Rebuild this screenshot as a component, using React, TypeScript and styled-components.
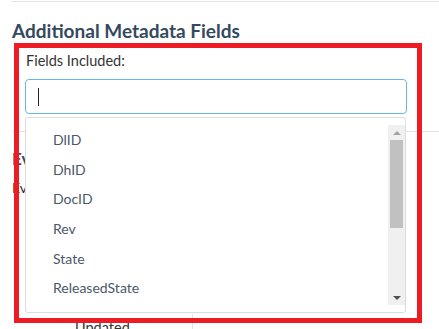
import React from 'react';
import styled, { createGlobalStyle } from 'styled-components';

const GlobalStyle = createGlobalStyle`
  html, body {
    margin: 0;
    padding: 0;
    background: #fff;
    overflow: hidden;
  }
  body {
    font-family: 'Lato', 'Open Sans', sans-serif;
    color: #333;
  }
`;

const Page = styled.div`
  position: relative;
  width: 439px;
  height: 329px;
  overflow: hidden;
`;

const Section = styled.section`
  margin-left: 12px;
  margin-top: 1px;
  border-top: 1px solid #e3e3e3;
`;

const Title = styled.h3`
  margin: 0;
  padding-top: 16px;
  font-size: 19px;
  font-weight: 700;
  color: #34495e;
  line-height: 25px;
`;

const Spacer = styled.div`
  height: 88px;
  border-bottom: 1px solid #e3e3e3;
`;

const SubHeading = styled.h4`
  margin: 0;
  padding-top: 17px;
  font-size: 17px;
  font-weight: 700;
  color: #34495e;
  line-height: 20px;
`;

const SubText = styled.p`
  margin: 0;
  padding-top: 10px;
  font-size: 14px;
  color: #333;
  line-height: 18px;
`;

const TableRow = styled.div`
  margin-top: 117px;
  display: flex;
  height: 20px;
`;

const Cell = styled.div`
  width: 181px;
  padding-left: 63px;
  box-sizing: border-box;
  border-right: 1px solid #e3e3e3;
  font-size: 14.5px;
  color: #333;
  line-height: 20px;
  padding-top: 4px;
`;

/* red annotation frame drawn over the page */
const Highlight = styled.div`
  position: absolute;
  left: 14px;
  top: 43px;
  width: 408px;
  height: 280px;
  box-sizing: border-box;
  border: 5px solid #ed1c24;
  padding: 3px 10px 0 6px;
`;

const Label = styled.label`
  display: block;
  margin-left: 1px;
  font-size: 14.5px;
  line-height: 19px;
  color: #333;
`;

const Input = styled.div`
  position: relative;
  margin-top: 9px;
  height: 35px;
  box-sizing: border-box;
  border: 1px solid #66b6ec;
  border-radius: 4px;
  background: #fff;
`;

const Caret = styled.span`
  position: absolute;
  left: 12px;
  top: 8px;
  width: 1px;
  height: 18px;
  background: #222;
`;

const Menu = styled.div`
  position: absolute;
  left: 6px;
  top: 69px;
  width: 381px;
  height: 196px;
  box-sizing: border-box;
  border: 1px solid #dcdcdc;
  border-radius: 3px;
  background: #fff;
  display: flex;
  padding: 7px 0 7px 0;
`;

const List = styled.ul`
  flex: 1;
  list-style: none;
  margin: 0;
  padding: 0;
`;

const Item = styled.li`
  height: 29.6px;
  display: flex;
  align-items: center;
  padding-left: 27px;
  font-size: 14px;
  color: #4a5868;
`;

const Track = styled.div`
  width: 17px;
  background: #f0f0f0;
  display: flex;
  flex-direction: column;
  align-items: center;
`;

const Arrow = styled.div<{ $down?: boolean; $dark?: boolean }>`
  width: 0;
  height: 0;
  margin: 6px 0 5px;
  border-left: 4px solid transparent;
  border-right: 4px solid transparent;
  ${p => (p.$down
    ? `border-top: 4px solid ${p.$dark ? '#505050' : '#a3a3a3'};`
    : `border-bottom: 4px solid ${p.$dark ? '#505050' : '#a3a3a3'};`)}
`;

const Thumb = styled.div`
  width: 13px;
  height: 88px;
  background: #c1c1c1;
`;

const Fill = styled.div`
  flex: 1;
`;

const fields = ['DlID', 'DhID', 'DocID', 'Rev', 'State', 'ReleasedState'];

export default function App() {
  return (
    <Page>
      <GlobalStyle />
      <Section>
        <Title>Additional Metadata Fields</Title>
        <Spacer />
        <SubHeading>Ev</SubHeading>
        <SubText>Ev</SubText>
        <TableRow>
          <Cell>Updated</Cell>
        </TableRow>
      </Section>
      <Highlight>
        <Label>Fields Included:</Label>
        <Input>
          <Caret />
        </Input>
        <Menu>
          <List>
            {fields.map(f => (
              <Item key={f}>{f}</Item>
            ))}
          </List>
          <Track>
            <Arrow />
            <Thumb />
            <Fill />
            <Arrow $down $dark />
          </Track>
        </Menu>
      </Highlight>
    </Page>
  );
}
